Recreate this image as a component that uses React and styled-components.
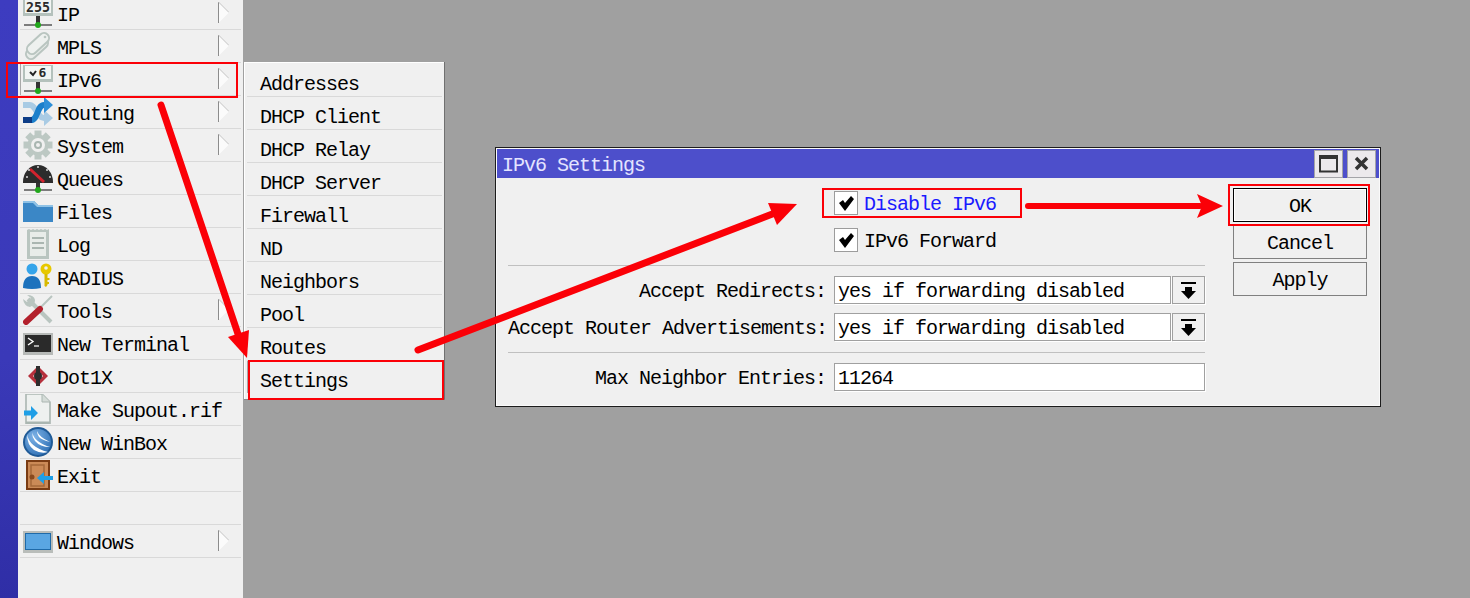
import React from "react";
import styled, { createGlobalStyle } from "styled-components";

const Global = createGlobalStyle`
  html, body { margin: 0; padding: 0; height: 100%; background: #a0a0a0; }
  * { box-sizing: border-box; }
`;

const MONO = `"Liberation Mono", "Noto Sans CJK SC", monospace`;

const Page = styled.div`
  position: relative;
  display: flex;
  width: 1470px;
  height: 598px;
  overflow: hidden;
  font-family: ${MONO};
  font-size: 20px;
  letter-spacing: -1px;
  line-height: 22px;
  color: #000;
`;
const Strip = styled.div`
  width: 18px;
  flex: none;
  background: linear-gradient(180deg, #3d3cc0 0%, #3a39b8 60%, #2f2ea6 100%);
`;
const MainMenu = styled.nav`
  width: 225px;
  flex: none;
  background: #f0f0f0;
  padding: 0 2px;
  margin-top: -3px;
  height: 601px;
`;
const Row = styled.div`
  display: flex;
  align-items: center;
  height: 33px;
  padding-left: 3px;
  padding-right: 12px;
  border-bottom: 1px solid #d9d9d9;
  ${(p) => p.$active && `box-shadow: inset 1px 0 0 #a8a8a8;`}
`;
const IconBox = styled.span`
  width: 30px;
  height: 30px;
  flex: none;
  margin-right: 4px;
  display: block;
  svg { display: block; }
`;
const RowLabel = styled.span`
  position: relative;
  top: 3px;
  white-space: pre;
`;
const Caret = styled.svg`
  margin-left: auto;
  width: 11px;
  height: 21px;
  flex: none;
  position: relative;
  top: -1px;
`;
const Desktop = styled.main`
  position: relative;
  flex: 1;
  background: #a0a0a0;
`;
const SubMenu = styled.div`
  position: absolute;
  left: 1px;
  top: 62px;
  width: 201px;
  height: 338px;
  background: #f0f0f0;
  padding: 2px 2px 0 3px;
  border-right: 1px solid #707070;
  border-bottom: 1px solid #8a8a8a;
  box-shadow: inset 1px 1px 0 #fff;
`;
const SubRow = styled.div`
  height: 33px;
  padding: 10px 0 0 13px;
  border-bottom: 1px solid ${(p) => (p.$last ? "transparent" : "#d9d9d9")};
  white-space: pre;
  ${(p) => p.$active && `box-shadow: inset 1px 0 0 #a8a8a8;`}
`;
const Win = styled.section`
  position: absolute;
  left: 252px;
  top: 147px;
  width: 886px;
  height: 260px;
  border: 1px solid #1c1c1c;
  background: #f0f0f0;
  padding: 1px;
  box-shadow: inset 0 0 0 1px #fafafa;
`;
const TitleBar = styled.header`
  display: flex;
  align-items: center;
  height: 29px;
  background: #4d4fcb;
  padding: 0 3px 0 5px;
  gap: 4px;
`;
const TitleText = styled.span`
  flex: 1;
  color: #e4e4ff;
  position: relative;
  top: 2px;
`;
const TitleBtn = styled.button`
  width: 29px;
  height: 28px;
  padding: 0;
  border: 1px solid #a4a4a8;
  background: #ece9ec;
  display: flex;
  align-items: center;
  justify-content: center;
`;
const WinBody = styled.div`
  display: flex;
  padding: 10px 13px 0 11px;
  gap: 28px;
`;
const Form = styled.div`
  width: 697px;
  flex: none;
  display: flex;
  flex-direction: column;
`;
const CheckRow = styled.label`
  display: flex;
  align-items: center;
  gap: 6px;
  padding-left: 326px;
  height: 24px;
  margin-top: ${(p) => p.$gap}px;
  color: ${(p) => p.$color || "#000"};
`;
const CheckLabel = styled.span`
  position: relative;
  top: 2px;
`;
const CheckBox = styled.span`
  width: 24px;
  height: 24px;
  border: 1px solid #9c9c9c;
  background: #fff;
  display: flex;
  align-items: center;
  justify-content: center;
  flex: none;
`;
const Divider = styled.hr`
  border: 0;
  height: 1px;
  margin: ${(p) => p.$top}px 0 ${(p) => p.$bottom}px;
  background: #c0c0c0;
`;
const Field = styled.div`
  display: grid;
  grid-template-columns: 318px 1fr;
  column-gap: 8px;
  align-items: center;
  height: 28px;
  margin-bottom: ${(p) => p.$bottom || 0}px;
`;
const FieldLabel = styled.span`
  text-align: right;
  white-space: pre;
  position: relative;
  top: 2px;
`;
const Control = styled.div`
  display: flex;
  height: 28px;
  gap: 1px;
`;
const Input = styled.div`
  flex: 1;
  height: 28px;
  background: #fff;
  border: 1px solid #a0a0a0;
  box-shadow: 1px 1px 0 #fff;
  padding: 4px 0 0 3px;
  white-space: pre;
`;
const DropBtn = styled.div`
  width: 33px;
  height: 28px;
  border: 1px solid #a0a0a0;
  box-shadow: 1px 1px 0 #fff;
  background: #f0f0f0;
  display: flex;
  align-items: center;
  justify-content: center;
`;
const Buttons = styled.div`
  display: flex;
  flex-direction: column;
  gap: 3px;
  width: 134px;
  flex: none;
`;
const Btn = styled.button`
  height: 34px;
  width: 134px;
  padding: 3px 0 0;
  font: inherit;
  letter-spacing: inherit;
  color: #000;
  background: #f0f0f0;
  border: 1px solid ${(p) => (p.$primary ? "#000" : "#808080")};
  ${(p) => p.$primary && `box-shadow: inset 0 0 0 1px #fff;`}
`;
const RedBox = styled.div`
  position: absolute;
  left: ${(p) => p.$x}px;
  top: ${(p) => p.$y}px;
  width: ${(p) => p.$w}px;
  height: ${(p) => p.$h}px;
  border: 2px solid #fb0007;
  pointer-events: none;
`;
const ArrowLayer = styled.svg`
  position: absolute;
  left: 0;
  top: 0;
  width: 1470px;
  height: 598px;
  pointer-events: none;
`;

const Svg = ({ children }) => (
  <svg width="30" height="30" viewBox="0 0 30 30">{children}</svg>
);

const Ground = () => (
  <>
    <rect x="13" y="18" width="4" height="9" fill="#333" />
    <rect x="1" y="26" width="28" height="2" fill="#555" opacity=".75" />
    <circle cx="15" cy="27" r="3" fill="#22a81c" />
  </>
);
const Monitor = ({ children }) => (
  <Svg>
    <rect x="0" y="1" width="30" height="17" fill="#b4c1bc" />
    <rect x="2" y="2" width="26" height="13" fill="#f2f5f3" />
    {children}
    <Ground />
  </Svg>
);
const IpIcon = () => (
  <Monitor>
    <text x="15" y="14" textAnchor="middle" fontFamily="DejaVu Sans Mono" fontWeight="700" fontSize="14" letterSpacing="0" textLength="24" lengthAdjust="spacingAndGlyphs" fill="#2b2b2b">255</text>
  </Monitor>
);
const Ip6Icon = () => (
  <Monitor>
    <path d="M7 8l3 3 3-4" fill="none" stroke="#222" strokeWidth="2" />
    <text x="19.500" y="13" textAnchor="middle" fontFamily="DejaVu Sans Mono" fontWeight="700" fontSize="13" letterSpacing="0" fill="#2b2b2b">6</text>
  </Monitor>
);
const MplsIcon = () => (
  <Svg>
    <line x1="8" y1="23" x2="20" y2="12" stroke="#b9c5c0" strokeWidth="12" strokeLinecap="round" />
    <line x1="8" y1="23" x2="20" y2="12" stroke="#e8ece9" strokeWidth="8" strokeLinecap="round" />
    <line x1="9" y1="18" x2="21" y2="7" stroke="#b9c5c0" strokeWidth="12" strokeLinecap="round" />
    <line x1="9" y1="18" x2="21" y2="7" stroke="#eef1ef" strokeWidth="8" strokeLinecap="round" />
    <circle cx="22" cy="6" r="1.300" fill="#b9c5c0" />
  </Svg>
);
const RoutingIcon = () => (
  <Svg>
    <path d="M0 8 H7 C13 8 14 21 21 21 H24" fill="none" stroke="#a9cbe4" strokeWidth="6" />
    <path d="M21 13 L30 21 L21 29Z" fill="#a9cbe4" />
    <path d="M0 23 H8 C15 23 14 8 21 8 H24" fill="none" stroke="#1b7fcb" strokeWidth="6" />
    <path d="M0 20 H9 V26 H0Z" fill="#0d3c86" />
    <path d="M21 0 L30 8 L21 16Z" fill="#2e8fd8" />
  </Svg>
);
const GearIcon = () => (
  <Svg>
    <g fill="#bcc8c3">
      {[0, 45, 90, 135, 180, 225, 270, 315].map((a) => (
        <rect key={a} x="11.500" y="0.500" width="7" height="8" transform={`rotate(${a} 15 15)`} />
      ))}
      <circle cx="15" cy="15" r="10.500" />
    </g>
    <circle cx="15" cy="15" r="7" fill="#f0f0f0" />
    <circle cx="15" cy="15" r="4" fill="#a9b6b1" />
    <circle cx="15" cy="15" r="2" fill="#f0f0f0" />
  </Svg>
);
const QueuesIcon = () => (
  <Svg>
    <path d="M0 19 A15 17 0 0 1 30 19 L30 20 H0Z" fill="#2c2c2c" />
    <path d="M7 6 L21 19" stroke="#d2232e" strokeWidth="3" />
    <g fill="#d8d8d8">
      <circle cx="15" cy="4" r="1" />
      <circle cx="24" cy="7" r="1" />
      <circle cx="27" cy="14" r="1" />
      <circle cx="4" cy="14" r="1" />
      <circle cx="6" cy="7" r="1" />
    </g>
    <rect x="13" y="20" width="4" height="7" fill="#333" />
    <rect x="1" y="26" width="28" height="2" fill="#555" opacity=".75" />
    <circle cx="15" cy="27" r="3" fill="#22a81c" />
  </Svg>
);
const FilesIcon = () => (
  <Svg>
    <path d="M0 5 H11 L15 9 H30 V26 H0Z" fill="#3b87c6" />
    <path d="M0 5 H11 L15 9 H30 V11 H14 L10 7 H0Z" fill="#8fc2e6" />
  </Svg>
);
const LogIcon = () => (
  <Svg>
    <path d="M4 1 l2 -1 2 1 2 -1 2 1 2 -1 2 1 2 -1 2 1 2 -1 2 1 2 -1 V30 H4Z" fill="#b9c5c0" />
    <rect x="7" y="3" width="16" height="24" fill="#e8ece9" />
    <path d="M9 9 H21 M9 14 H21 M9 19 H21" stroke="#aab6b1" strokeWidth="2" />
  </Svg>
);
const RadiusIcon = () => (
  <Svg>
    <circle cx="9" cy="7" r="5.500" fill="#35a4ea" />
    <path d="M0 26 Q0 14 9 14 Q18 14 18 26 Q9 28 0 26Z" fill="#1c72bd" />
    <circle cx="23" cy="7" r="5.500" fill="#e7c800" />
    <circle cx="23" cy="6" r="1.800" fill="#f0f0f0" />
    <path d="M21.500 12 H24.500 V23 L23 25 L21.500 24Z M24 16 h2.500 v2 h-2.500Z M24 20 h2 v2 h-2Z" fill="#d8b900" />
  </Svg>
);
const ToolsIcon = () => (
  <Svg>
    <path d="M5 4 L28 27" fill="none" stroke="#b9c5c0" strokeWidth="4" />
    <path d="M0 4 L4 7 L8 3 L4 0 Q11 0 12 5 Q12 10 7 12 Q1 11 0 4Z" fill="#b9c5c0" />
    <path d="M29 1 L15 15" stroke="#b9c5c0" strokeWidth="2" />
    <path d="M17 14 L3 27" stroke="#b3202c" strokeWidth="6" strokeLinecap="round" />
  </Svg>
);
const TerminalIcon = () => (
  <Svg>
    <rect x="0" y="5" width="30" height="22" fill="#b6b9b7" />
    <rect x="2" y="7" width="26" height="17" fill="#2a2a2a" />
    <path d="M5 10 L10 13.500 L5 17" fill="none" stroke="#fff" strokeWidth="1.400" />
    <path d="M11 18 H16" stroke="#fff" strokeWidth="1.200" />
  </Svg>
);
const DotIcon = () => (
  <Svg>
    <path d="M13 7 L5 15 L13 23 V18 L10 15 L13 12Z M17 7 L25 15 L17 23 V18 L20 15 L17 12Z" fill="#b5303c" />
    <rect x="13" y="5" width="4" height="20" fill="#2c2c2c" />
    <circle cx="15" cy="15" r="4" fill="#2c2c2c" />
  </Svg>
);
const SupoutIcon = () => (
  <Svg>
    <path d="M3 0 H19 L27 8 V30 H3Z" fill="#eef1ef" />
    <path d="M3 0 H19 L27 8 V30 H3Z" fill="none" stroke="#aab6b1" strokeWidth="1.600" />
    <path d="M19 0 V8 H27" fill="#d5dcd8" stroke="#aab6b1" strokeWidth="1" />
    <rect x="3" y="27.500" width="24" height="2.500" fill="#aab6b1" />
    <path d="M1 16.500 H8 V12 L15 19 L8 26 V21.500 H1Z" fill="#1f9fe6" />
  </Svg>
);
const WinboxIcon = () => (
  <Svg>
    <defs>
      <radialGradient id="wb" cx="35%" cy="30%" r="80%">
        <stop offset="0" stopColor="#7db2e6" />
        <stop offset="1" stopColor="#2f70b5" />
      </radialGradient>
    </defs>
    <circle cx="15" cy="15" r="15" fill="#1f5a96" />
    <circle cx="15" cy="15" r="13" fill="url(#wb)" />
    <path d="M4 7 Q6 20 25 25 Q18 27 11 23 Q4 18 4 7Z" fill="#fff" />
    <path d="M9 5 Q11 15 27 20 Q17 20 12 14 Q9 10 9 5Z" fill="#fff" />
    <path d="M14 4 Q16 10 27 15 Q19 13 16 10 Q14 7 14 4Z" fill="#fff" />
  </Svg>
);
const ExitIcon = () => (
  <Svg>
    <rect x="3" y="0" width="24" height="30" fill="#7a3c14" />
    <rect x="5" y="2" width="20" height="26" fill="#cb8a57" />
    <rect x="8" y="5" width="13" height="21" fill="none" stroke="#a5683a" strokeWidth="1.500" />
    <circle cx="9" cy="17" r="2.500" fill="#8a4a1e" />
    <path d="M14 18 L21 12 V16 H30 V20 H21 V24Z" fill="#1f9fe6" />
  </Svg>
);
const WindowsIcon = () => (
  <Svg>
    <rect x="0" y="5" width="30" height="22" fill="#b9bdba" />
    <rect x="2" y="7" width="26" height="17" fill="#1f6aa8" />
    <rect x="3" y="8" width="24" height="15" fill="#5aa6e2" />
  </Svg>
);

const menu = [
  ["IP", IpIcon, true],
  ["MPLS", MplsIcon, true],
  ["IPv6", Ip6Icon, true, true],
  ["Routing", RoutingIcon, true],
  ["System", GearIcon, true],
  ["Queues", QueuesIcon],
  ["Files", FilesIcon],
  ["Log", LogIcon],
  ["RADIUS", RadiusIcon],
  ["Tools", ToolsIcon, true],
  ["New Terminal", TerminalIcon],
  ["Dot1X", DotIcon],
  ["Make Supout.rif", SupoutIcon],
  ["New WinBox", WinboxIcon],
  ["Exit", ExitIcon],
  [null],
  ["Windows", WindowsIcon, true],
];

const sub = ["Addresses", "DHCP Client", "DHCP Relay", "DHCP Server", "Firewall", "ND", "Neighbors", "Pool", "Routes", "Settings"];

const CaretIcon = () => (
  <Caret viewBox="0 0 11 21">
    <path d="M0.500 0 L11 10.500 L0.500 21Z" fill="#fbfbfb" />
    <path d="M0.500 0 V21" stroke="#8c8c8c" />
    <path d="M0.500 0 L11 10.500" stroke="#c4c4c4" />
  </Caret>
);

const Tick = () => (
  <svg width="15" height="15" viewBox="0 0 15 15">
    <path d="M0 7 L4 4 L6 7 L12 0 L15 3 L6 15Z" fill="#000" />
  </svg>
);
const DropIcon = () => (
  <svg width="15" height="17" viewBox="0 0 15 17">
    <rect x="0" y="0" width="15" height="2" fill="#000" />
    <path d="M4 5 H11 V9 H15 L7.500 17 L0 9 H4Z" fill="#000" />
  </svg>
);

export default function App() {
  return (
    <Page>
      <Global />
      <Strip />
      <MainMenu>
        {menu.map(([label, Icon, caret, active], i) => (
          <Row key={i} $active={active}>
            {label && (
              <>
                <IconBox><Icon /></IconBox>
                <RowLabel>{label}</RowLabel>
                {caret && <CaretIcon />}
              </>
            )}
          </Row>
        ))}
      </MainMenu>
      <Desktop>
        <SubMenu>
          {sub.map((s, i) => (
            <SubRow key={s} $last={i === sub.length - 1} $active={s === "Settings"}>{s}</SubRow>
          ))}
        </SubMenu>
        <Win>
          <TitleBar>
            <TitleText>IPv6 Settings</TitleText>
            <TitleBtn aria-label="Maximize">
              <svg width="19" height="18" viewBox="0 0 19 18">
                <rect x="1" y="1.500" width="17" height="15" fill="none" stroke="#333" strokeWidth="2" />
                <rect x="0" y="0" width="19" height="4" fill="#333" />
              </svg>
            </TitleBtn>
            <TitleBtn aria-label="Close">
              <svg width="15" height="15" viewBox="0 0 15 15">
                <path d="M2 2 L13 13 M13 2 L2 13" stroke="#333" strokeWidth="3.500" />
              </svg>
            </TitleBtn>
          </TitleBar>
          <WinBody>
            <Form>
              <CheckRow $gap={3} $color="#1a1aff"><CheckBox><Tick /></CheckBox><CheckLabel>Disable IPv6</CheckLabel></CheckRow>
              <CheckRow $gap={13}><CheckBox><Tick /></CheckBox><CheckLabel>IPv6 Forward</CheckLabel></CheckRow>
              <Divider $top={13} $bottom={10} />
              <Field $bottom={9}>
                <FieldLabel>Accept Redirects:</FieldLabel>
                <Control><Input>yes if forwarding disabled</Input><DropBtn><DropIcon /></DropBtn></Control>
              </Field>
              <Field>
                <FieldLabel>Accept Router Advertisements:</FieldLabel>
                <Control><Input>yes if forwarding disabled</Input><DropBtn><DropIcon /></DropBtn></Control>
              </Field>
              <Divider $top={11} $bottom={10} />
              <Field>
                <FieldLabel>Max Neighbor Entries:</FieldLabel>
                <Control><Input>11264</Input></Control>
              </Field>
            </Form>
            <Buttons>
              <Btn $primary>OK</Btn>
              <Btn>Cancel</Btn>
              <Btn>Apply</Btn>
            </Buttons>
          </WinBody>
        </Win>
      </Desktop>
      <RedBox $x={6} $y={62} $w={232} $h={36} />
      <RedBox $x={248} $y={360} $w={196} $h={40} />
      <RedBox $x={822} $y={188} $w={200} $h={30} />
      <RedBox $x={1228} $y={184} $w={142} $h={42} />
      <ArrowLayer viewBox="0 0 1470 598">
        <g fill="#fb0007" stroke="#fb0007" strokeLinecap="round">
          <line x1="161" y1="105" x2="238" y2="334" strokeWidth="7" />
          <polygon points="247,358 228,337 249,330" stroke="none" />
          <line x1="418" y1="350" x2="775" y2="213" strokeWidth="7" />
          <polygon points="797,204 768,203 777,225" stroke="none" />
          <line x1="1028" y1="206" x2="1200" y2="206" strokeWidth="6" />
          <polygon points="1223,206 1197,194 1202,206 1197,218" stroke="none" />
        </g>
      </ArrowLayer>
    </Page>
  );
}
